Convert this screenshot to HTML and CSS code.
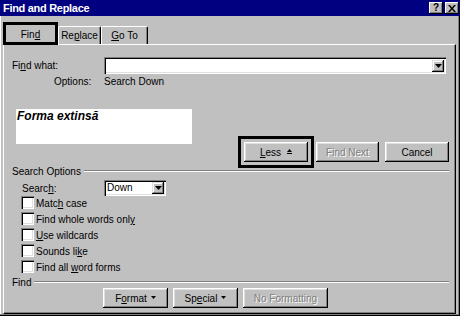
FILE: index.html
```html
<!DOCTYPE html>
<html>
<head>
<meta charset="utf-8">
<link rel="stylesheet" href="styles.css">
</head>
<body>
<div class="window">
  <div class="titlebar">
    <span class="title">Find and Replace</span>
    <div class="caps">
      <div class="cap help">?</div>
      <div class="cap close">
        <svg width="8" height="7" viewBox="0 0 8 7"><path d="M0 0h2l2 2.5 2-2.5h2l-3 3.5 3 3.5h-2l-2-2.5-2 2.5h-2l3-3.5z" fill="#000"/></svg>
      </div>
    </div>
  </div>
  <div class="client">
    <div class="tabs">
      <div class="tab active"><span>Fin<u>d</u></span></div>
      <div class="tab replace"><span>Re<u>p</u>lace</span></div>
      <div class="tab goto"><span><u>G</u>o To</span></div>
    </div>
    <div class="panel">
      <div class="row findwhat">
        <span class="lbl">Fi<u>n</u>d what:</span>
        <div class="combo wide">
          <div class="dd"><svg width="7" height="4" viewBox="0 0 7 4"><path d="M0 0h7L3.5 4z" fill="#000"/></svg></div>
        </div>
      </div>
      <div class="row options">
        <span class="opt-lbl">Options:</span><span>Search Down</span>
      </div>
      <div class="row mid">
        <div class="forma">Forma extinsă</div>
        <div class="btns">
          <div class="focus">
            <div class="btn less"><span><u>L</u>ess</span>
              <svg class="up" width="5" height="5" viewBox="0 0 5 5"><path d="M0 3L2.5 0 5 3z" fill="#000"/><rect x="0" y="4" width="5" height="1" fill="#000"/></svg>
            </div>
          </div>
          <div class="btn findnext disabled"><span>Find Next</span></div>
          <div class="btn cancel"><span>Cancel</span></div>
        </div>
      </div>
      <div class="group-h so"><span>Search Options</span><i class="groove"></i></div>
      <div class="row search">
        <span class="slbl">Searc<u>h</u>:</span>
        <div class="combo small"><span class="val">Down</span>
          <div class="dd"><svg width="7" height="4" viewBox="0 0 7 4"><path d="M0 0h7L3.5 4z" fill="#000"/></svg></div>
        </div>
      </div>
      <div class="checks">
        <div class="check"><i class="box"></i><span>Matc<u>h</u> case</span></div>
        <div class="check"><i class="box"></i><span>Find whole words onl<u>y</u></span></div>
        <div class="check"><i class="box"></i><span><u>U</u>se wildcards</span></div>
        <div class="check"><i class="box"></i><span>Sounds li<u>k</u>e</span></div>
        <div class="check"><i class="box"></i><span>Find all <u>w</u>ord forms</span></div>
      </div>
      <div class="group-h fd"><span>Find</span><i class="groove"></i></div>
      <div class="row bottom">
        <div class="btn fmt"><span>F<u>o</u>rmat</span> <svg class="down" width="5" height="3" viewBox="0 0 5 3"><path d="M0 0h5L2.5 3z" fill="#000"/></svg></div>
        <div class="btn spec"><span>Sp<u>e</u>cial</span> <svg class="down" width="5" height="3" viewBox="0 0 5 3"><path d="M0 0h5L2.5 3z" fill="#000"/></svg></div>
        <div class="btn nofmt disabled"><span>No Formatting</span></div>
      </div>
    </div>
  </div>
</div>
</body>
</html>
```
FILE: styles.css
```css
* { box-sizing: border-box; }
html, body { margin: 0; padding: 0; }
body {
  width: 460px;
  height: 316px;
  overflow: hidden;
  background: #c0c0c0;
  font-family: "Liberation Sans", Arial, sans-serif;
  font-size: 10px;
  color: #000;
}
u { text-decoration: underline; text-underline-offset: 1px; }

.window {
  width: 460px;
  height: 316px;
  display: flex;
  flex-direction: column;
}

.titlebar {
  height: 16px;
  flex: none;
  background: #000080;
  display: flex;
  align-items: center;
  justify-content: space-between;
  padding-left: 3px;
  padding-right: 1px;
}
.title {
  color: #fff;
  font-weight: bold;
  font-size: 11px;
  letter-spacing: -0.3px;
}
.caps { display: flex; gap: 2px; align-items: center; }
.cap {
  width: 14px;
  height: 12px;
  background: #c0c0c0;
  box-shadow: inset -1px -1px #000, inset 1px 1px #fff, inset -2px -2px #808080;
  display: flex;
  align-items: center;
  justify-content: center;
  font-weight: bold;
  font-size: 10px;
  line-height: 10px;
}

.client {
  flex: 1;
  padding: 6px 0 0 3px;
  border-right: 1px solid #000;
  border-bottom: 1px solid #000;
  box-shadow: inset -1px -1px #808080, inset 1px 0 #fff;
}

.tabs {
  display: flex;
  align-items: flex-end;
  height: 23px;
}
.tab {
  display: flex;
  align-items: center;
  justify-content: center;
  height: 18px;
  margin-bottom: 1px;
  border-top: 1px solid #fff;
  border-left: 1px solid #fff;
  border-right: 1px solid #000;
  box-shadow: inset -1px 0 #808080;
  border-radius: 2px 2px 0 0;
}
.tab.active {
  position: relative;
  z-index: 1;
  width: 55px;
  height: 23px;
  margin-bottom: 0;
  border: 3px solid #000;
  border-radius: 0;
  box-shadow: none;
  background: #c0c0c0;
  padding-top: 1px;
}
.tab.replace { width: 43px; }
.tab.goto { width: 47px; }

.panel {
  width: 453px;
  height: 270px;
  margin-top: -1px;
  border-top: 1px solid #fff;
  border-left: 1px solid #fff;
  border-right: 1px solid #000;
  border-bottom: 1px solid #000;
  box-shadow: inset -1px -1px #808080;
  padding-right: 6px;
}

.row { display: flex; align-items: center; }

.combo {
  background: #fff;
  box-shadow: inset 1px 1px #808080, inset 2px 2px #000, inset -1px -1px #fff, inset -2px -2px #dfdfdf;
  display: flex;
  align-items: center;
  justify-content: space-between;
  padding: 2px;
}
.dd {
  width: 12px;
  height: 12px;
  background: #c0c0c0;
  box-shadow: inset -1px -1px #000, inset 1px 1px #dfdfdf, inset -2px -2px #808080, inset 2px 2px #fff;
  display: flex;
  align-items: center;
  justify-content: center;
  margin-left: auto;
}

.findwhat { margin-top: 12px; height: 17px; }
.lbl { margin-left: 8px; width: 92px; }
.combo.wide { width: 342px; height: 17px; }

.options { margin-top: 1px; height: 12px; }
.opt-lbl { margin-left: 50px; width: 50px; }

.mid { margin-top: 22px; align-items: flex-start; }
.forma {
  margin-left: 12px;
  width: 176px;
  height: 35px;
  background: #fff;
  font-size: 12px;
  line-height: 14px;
  font-weight: bold;
  font-style: italic;
  padding-left: 1px;
}
.btns {
  margin-left: auto;
  margin-top: 27px;
  display: flex;
  align-items: center;
}
.focus {
  border: 3px solid #000;
  padding: 3px;
}
.btn {
  height: 20px;
  background: #c0c0c0;
  box-shadow: inset -1px -1px #000, inset 1px 1px #fff, inset -2px -2px #808080, inset 2px 2px #dfdfdf;
  display: flex;
  align-items: center;
  justify-content: center;
  gap: 4px;
  flex: none;
}
.btn.disabled {
  color: #808080;
  text-shadow: 1px 1px #fff;
}
.less { width: 64px; gap: 6px; }
.less .up { margin-top: -1px; }
.findnext { width: 63px; margin-left: 2px; }
.cancel { width: 64px; margin-left: 6px; }

.group-h {
  display: flex;
  align-items: center;
  height: 12px;
}
.group-h span { margin-left: 8px; }
.groove {
  flex: 1;
  height: 2px;
  margin-left: 3px;
  border-top: 1px solid #808080;
  border-bottom: 1px solid #fff;
}
.so { margin-top: -3px; }

.search { margin-top: 3px; height: 16px; }
.slbl { margin-left: 18px; width: 82px; }
.combo.small { width: 62px; height: 16px; padding: 2px 2px 2px 3px; }
.combo.small .val { line-height: 12px; }

.checks { display: flex; flex-direction: column; }
.check {
  display: flex;
  align-items: flex-start;
  height: 16px;
}
.box {
  margin-left: 17px;
  width: 13px;
  height: 13px;
  background: #fff;
  box-shadow: inset 1px 1px #808080, inset 2px 2px #000, inset -1px -1px #fff, inset -2px -2px #dfdfdf;
}
.check span { margin-left: 2px; line-height: 16px; }

.bottom { margin-left: 99px; gap: 5px; }
.fmt, .spec { width: 65px; }
.nofmt { width: 85px; }
.down { margin-top: -1px; }
```
